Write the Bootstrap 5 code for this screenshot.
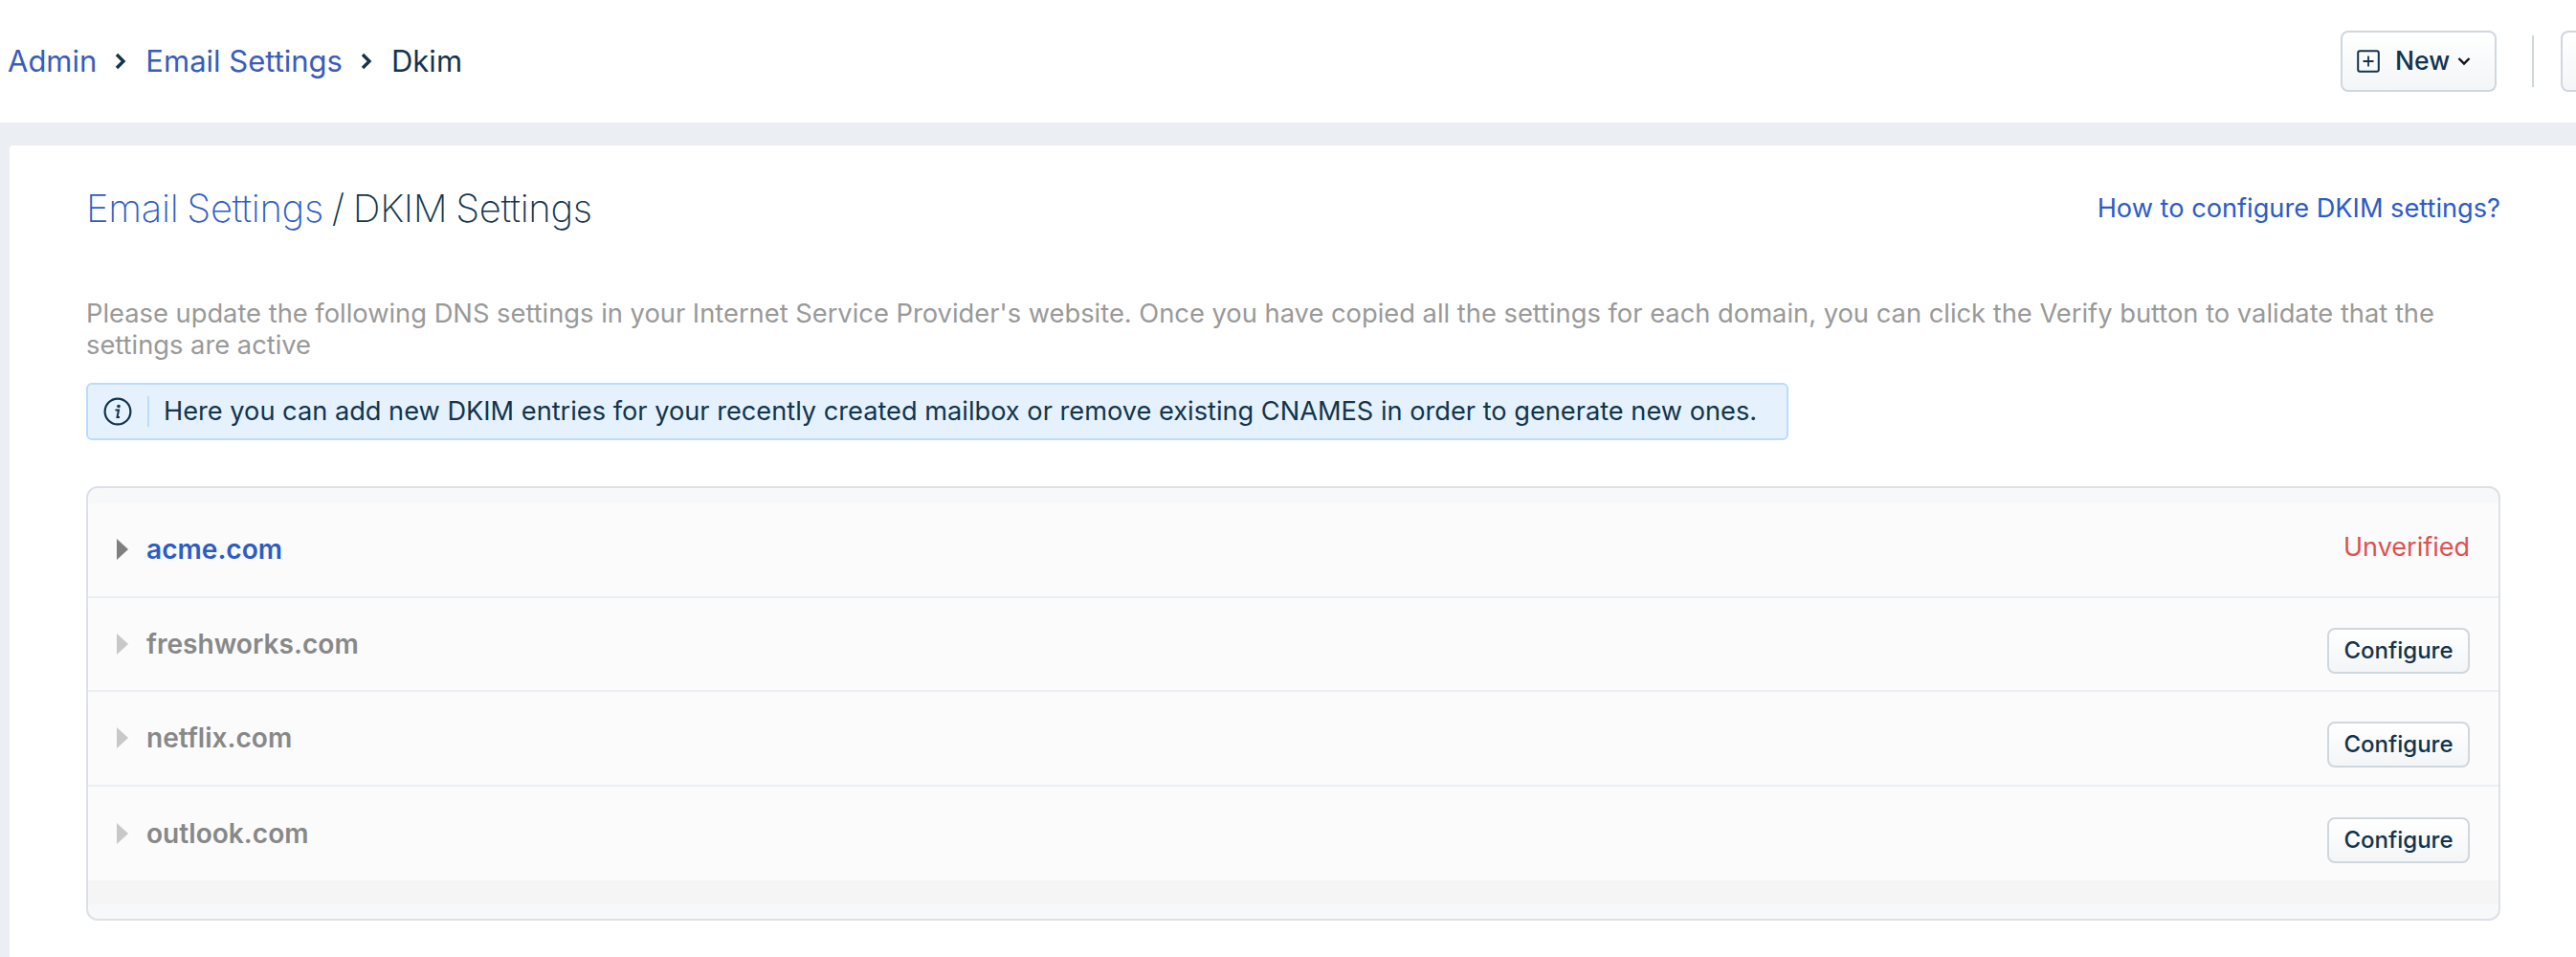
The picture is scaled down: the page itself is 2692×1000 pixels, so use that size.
<!DOCTYPE html>
<html lang="en">
<head>
    <meta charset="UTF-8">
    <meta name="viewport" content="width=device-width, initial-scale=1.0">
    <title>DKIM Settings</title>
    <link href="https://cdn.jsdelivr.net/npm/bootstrap@5.3.0/dist/css/bootstrap.min.css" rel="stylesheet">
    <style>
        body {
            font-family: Inter, "Liberation Sans", sans-serif;
            background: #ebeff3;
            color: #12344d;
            height: 1000px;
            overflow: hidden;
        }
        a { text-decoration: none; }
        .top-bar {
            height: 128px;
            background: #fff;
            padding-left: 8px;
        }
        .crumbs {
            font-size: 31px;
            line-height: 40px;
            margin: 0;
            padding: 0;
            list-style: none;
        }
        .crumbs a { color: #3a5cb8; }
        .crumbs svg { margin: 0 19px 0 18px; }
        .btn-fresh {
            background: linear-gradient(180deg, #fff, #f3f5f7);
            border: 2px solid #cfd7df;
            color: #12344d;
            border-radius: 8px;
        }
        .btn-new {
            width: 163px;
            height: 64px;
            font-size: 26.500px;
            font-weight: 500;
            padding: 0 0 0 15px;
        }
        .bar-rule {
            width: 2px;
            height: 54px;
            background: #cfd7df;
            margin: 0 28px 0 37px;
        }
        .btn-stub {
            width: 16px;
            height: 64px;
            border-right: 0;
            border-radius: 8px 0 0 8px;
            padding: 0;
        }
        .main-panel {
            margin: 24px 0 0 10px;
            height: 848px;
            background: #fff;
            border-radius: 4px 0 0 0;
            padding: 0 79px 0 80px;
        }
        .title-row { height: 160px; padding-top: 42px; }
        .page-title {
            font-size: 40px;
            font-weight: 200;
            letter-spacing: -0.3px;
            word-spacing: -2px;
            margin: 0;
            line-height: 48px;
        }
        .page-title a { color: #2c5cc5; }
        .help-link { font-size: 27.200px; line-height: 48px; color: #2c5cc5; }
        .intro-text {
            font-size: 27.300px;
            line-height: 32.500px;
            color: #999;
            margin: 0 0 23px 0;
        }
        .info-note {
            width: 1779px;
            height: 60px;
            background: #e5f2fd;
            border: 2px solid #bbdcfe;
            border-radius: 6px;
            padding: 0 16px;
            margin: 0 0 48px 0;
            font-size: 27.200px;
            color: #12344d;
        }
        .note-rule {
            width: 2px;
            height: 32px;
            background: #bbdcfe;
            margin: 0 15px 0 16px;
        }
        .domain-box {
            height: 454px;
            border: 2px solid #dde1e6;
            border-radius: 12px;
            background: #f7f8fa;
            padding: 16px 0;
            overflow: hidden;
        }
        .domain-row {
            height: 98.500px;
            background: #fbfbfc;
            border: 0;
            border-bottom: 2px solid #ebeff3;
            border-radius: 0;
            padding: 0 30px 0 30px;
        }
        .domain-row:last-child { border-bottom: 0; }
        .domain-list { background: #f5f5f6; padding-bottom: 25px; border-radius: 0; }
        .domain-name {
            font-size: 28.100px;
            font-weight: 600;
            color: #888;
            margin-left: 19px;
        }
        .domain-name.is-active { color: #2c5cc5; }
        .status-bad { font-size: 27px; color: #e0504f; margin-top: -5px; }
        .btn-configure {
            width: 149px;
            height: 48px;
            font-size: 24px;
            font-weight: 500;
            padding: 0;
            margin-top: 14px;
        }
    </style>
</head>
<body>
<header class="top-bar d-flex align-items-center">
    <ol class="crumbs d-flex align-items-center">
        <li><a href="#">Admin</a></li>
        <li class="d-flex align-items-center"><svg width="14" height="20" viewBox="0 0 14 20"><path d="M3 3l7 7-7 7" fill="none" stroke="#12344d" stroke-width="3.400"/></svg><a href="#">Email Settings</a></li>
        <li class="d-flex align-items-center"><svg width="14" height="20" viewBox="0 0 14 20"><path d="M3 3l7 7-7 7" fill="none" stroke="#12344d" stroke-width="3.400"/></svg>Dkim</li>
    </ol>
    <div class="ms-auto d-flex align-items-center">
        <button class="btn btn-fresh btn-new d-flex align-items-center justify-content-start" type="button">
            <svg width="24" height="24" viewBox="0 0 24 24" class="me-3"><rect x="1.200" y="1.200" width="21.600" height="21.600" rx="2" fill="none" stroke="#12344d" stroke-width="2"/><path d="M12 6.500v11M6.500 12h11" stroke="#12344d" stroke-width="1.800"/></svg>
            New
            <svg width="14" height="10" viewBox="0 0 14 10" class="ms-2"><path d="M1.500 2l5.500 5.500L12.500 2" fill="none" stroke="#111" stroke-width="2.400"/></svg>
        </button>
        <div class="bar-rule"></div>
        <button class="btn btn-fresh btn-stub" type="button" aria-label="More"></button>
    </div>
</header>

<main class="main-panel">
    <div class="title-row d-flex justify-content-between align-items-start">
        <h1 class="page-title"><a href="#">Email Settings</a> / DKIM Settings</h1>
        <a class="help-link" href="#">How to configure DKIM settings?</a>
    </div>
    <p class="intro-text">Please update the following DNS settings in your Internet Service Provider's website. Once you have copied all the settings for each domain, you can click the Verify button to validate that the settings are active</p>
    <div class="alert info-note d-flex align-items-center" role="alert">
        <svg width="30" height="30" viewBox="0 0 30 30"><circle cx="15" cy="15" r="13.400" fill="none" stroke="#12344d" stroke-width="2.200"/><circle cx="16" cy="9.500" r="1.800" fill="#12344d"/><path d="M12.500 13.500h3.500l-1.500 7.500h2.500" fill="none" stroke="#12344d" stroke-width="2"/></svg>
        <span class="note-rule"></span>
        Here you can add new DKIM entries for your recently created mailbox or remove existing CNAMES in order to generate new ones.
    </div>
    <div class="domain-box">
        <ul class="list-group domain-list">
            <li class="list-group-item domain-row d-flex align-items-center justify-content-between">
                <span class="d-flex align-items-center">
                    <svg width="12" height="22" viewBox="0 0 12 22"><path d="M0 0l12 11L0 22z" fill="#7f7f7f"/></svg>
                    <a class="domain-name is-active" href="#">acme.com</a>
                </span>
                <span class="status-bad">Unverified</span>
            </li>
            <li class="list-group-item domain-row d-flex align-items-center justify-content-between">
                <span class="d-flex align-items-center">
                    <svg width="12" height="22" viewBox="0 0 12 22"><path d="M0 0l12 11L0 22z" fill="#c8c8c8"/></svg>
                    <span class="domain-name">freshworks.com</span>
                </span>
                <button class="btn btn-fresh btn-configure" type="button">Configure</button>
            </li>
            <li class="list-group-item domain-row d-flex align-items-center justify-content-between">
                <span class="d-flex align-items-center">
                    <svg width="12" height="22" viewBox="0 0 12 22"><path d="M0 0l12 11L0 22z" fill="#c8c8c8"/></svg>
                    <span class="domain-name">netflix.com</span>
                </span>
                <button class="btn btn-fresh btn-configure" type="button">Configure</button>
            </li>
            <li class="list-group-item domain-row d-flex align-items-center justify-content-between">
                <span class="d-flex align-items-center">
                    <svg width="12" height="22" viewBox="0 0 12 22"><path d="M0 0l12 11L0 22z" fill="#c8c8c8"/></svg>
                    <span class="domain-name">outlook.com</span>
                </span>
                <button class="btn btn-fresh btn-configure" type="button">Configure</button>
            </li>
        </ul>
    </div>
</main>
<script src="https://cdn.jsdelivr.net/npm/bootstrap@5.3.0/dist/js/bootstrap.bundle.min.js"></script>
</body>
</html>
